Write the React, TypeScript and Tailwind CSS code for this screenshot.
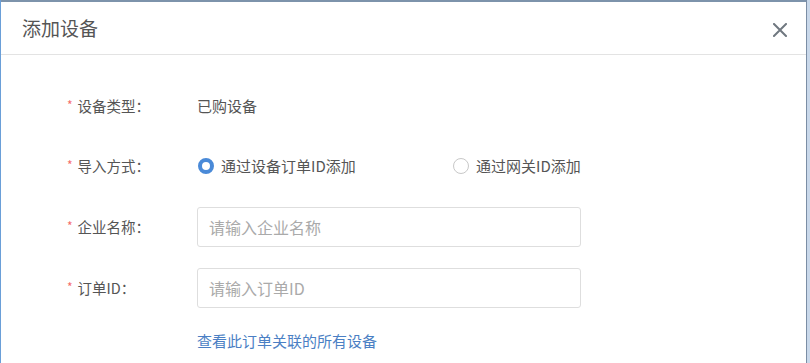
import React from "react";

const font = { fontFamily: '"Noto Sans CJK SC", "Noto Sans", sans-serif' };

function Label({ text }: { text: string }) {
  return (
    <div className="w-[197px] shrink-0 flex items-center pl-[67px] text-[14.5px] text-[#555] whitespace-nowrap">
      <span className="text-[#f56c6c] text-[12px] mr-[5px] relative top-[-1px]">*</span>
      <span>{text}</span>
    </div>
  );
}

export default function App() {
  return (
    <div style={font} className="w-[810px] h-[363px] bg-white overflow-hidden relative">
      <div className="absolute inset-x-0 top-0 h-[2px] bg-[#7d93ab]" />
      <div className="absolute left-0 inset-y-0 w-[1px] bg-[#6a9fd8]" />
      <div className="absolute right-0 inset-y-0 w-[4px] bg-[#c9d8ea] border-l border-[#7b8ea5]" />
      <div className="h-[55px] flex items-center justify-between pl-[22px] pr-[22px] border-b border-[#e3e3e3] pt-[2px]">
        <span className="text-[19px] text-[#555]">添加设备</span>
        <svg width="14" height="14" viewBox="0 0 14 14" className="mr-[1px] mt-[4px]">
          <path d="M1 1L13 13M13 1L1 13" stroke="#707880" strokeWidth="2" strokeLinecap="square" />
        </svg>
      </div>
      <div className="flex flex-col">
        <div className="flex items-center h-[22px] mt-[40px]">
          <Label text="设备类型：" />
          <span className="text-[15px] text-[#555]">已购设备</span>
        </div>
        <div className="flex items-center h-[22px] mt-[38px]">
          <Label text="导入方式：" />
          <div className="flex items-center w-[256px] pl-[1px]">
            <span className="w-[16px] h-[16px] rounded-full border-[4px] border-[#4a8ad8] bg-white mr-[7px]" />
            <span className="text-[15px] text-[#555]">通过设备订单ID添加</span>
          </div>
          <div className="flex items-center">
            <span className="w-[16px] h-[16px] rounded-full border border-[#c8c8c8] bg-white mr-[7px]" />
            <span className="text-[15px] text-[#555]">通过网关ID添加</span>
          </div>
        </div>
        <div className="flex items-center mt-[30px]">
          <Label text="企业名称：" />
          <div className="w-[384px] h-[40px] border border-[#dedede] rounded-[3px] flex items-center pl-[11px] text-[16px] text-[#aaa]">
            请输入企业名称
          </div>
        </div>
        <div className="flex items-center mt-[21px]">
          <Label text="订单ID：" />
          <div className="w-[384px] h-[40px] border border-[#dedede] rounded-[3px] flex items-center pl-[11px] text-[16px] text-[#aaa]">
            请输入订单ID
          </div>
        </div>
        <div className="flex items-center mt-[22px] pl-[197px]">
          <span className="text-[15px] text-[#4b7fc4]">查看此订单关联的所有设备</span>
        </div>
      </div>
    </div>
  );
}
